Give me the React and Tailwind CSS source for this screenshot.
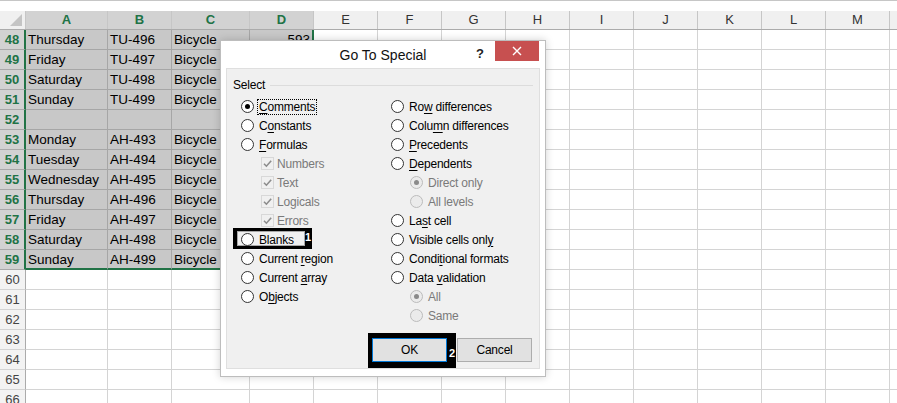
import React from 'react';

const cols = [
  { k: 'A', w: 'w-[82px]', sel: true },
  { k: 'B', w: 'w-[64px]', sel: true },
  { k: 'C', w: 'w-[78px]', sel: true },
  { k: 'D', w: 'w-[64px]', sel: true },
  ...['E', 'F', 'G', 'H', 'I', 'J', 'K', 'L', 'M', 'N'].map((k) => ({ k, w: 'w-[64px]', sel: false })),
];

// column D is hidden under the dialog below row 48
const rows = [
  [48, 'Thursday', 'TU-496', 'Bicycle', '593'],
  [49, 'Friday', 'TU-497', 'Bicycle', ''],
  [50, 'Saturday', 'TU-498', 'Bicycle', ''],
  [51, 'Sunday', 'TU-499', 'Bicycle', ''],
  [52, '', '', '', ''],
  [53, 'Monday', 'AH-493', 'Bicycle', ''],
  [54, 'Tuesday', 'AH-494', 'Bicycle', ''],
  [55, 'Wednesday', 'AH-495', 'Bicycle', ''],
  [56, 'Thursday', 'AH-496', 'Bicycle', ''],
  [57, 'Friday', 'AH-497', 'Bicycle', ''],
  [58, 'Saturday', 'AH-498', 'Bicycle', ''],
  [59, 'Sunday', 'AH-499', 'Bicycle', ''],
  [60], [61], [62], [63], [64], [65], [66],
];

function HeaderRow() {
  return (
    <div className="flex h-[19px] shrink-0 bg-[#f0f0f0] border-b border-[#ababab]">
      <div className="w-[26px] shrink-0 h-full border-r border-[#c6c6c6] relative">
        <svg className="absolute right-[3px] bottom-[3px]" width="12" height="12" viewBox="0 0 12 12">
          <polygon points="12,0 12,12 0,12" fill="#c4c4c4" />
        </svg>
      </div>
      {cols.map((c) => (
        <div
          key={c.k}
          className={`${c.w} shrink-0 h-full border-r border-[#c6c6c6] flex items-center justify-center text-[13px] ${
            c.sel ? 'bg-[#d2d2d2] text-[#217346] font-bold' : 'text-[#333]'
          }`}
        >
          {c.k === 'N' ? '' : c.k}
        </div>
      ))}
    </div>
  );
}

function SheetRow({ r }) {
  const [n, ...vals] = r;
  const sel = n <= 59;
  const last = n === 59;
  return (
    <div className="flex h-[20px] shrink-0">
      <div
        className={`w-[26px] shrink-0 h-full border-b flex items-center justify-center text-[13px] ${
          sel
            ? 'bg-[#d2d2d2] border-[#a8a8a8] border-r-2 border-r-[#217346] text-[#217346] font-bold'
            : 'bg-[#f3f3f3] border-[#d4d4d4] border-r border-r-[#ababab] text-[#444]'
        }`}
      >
        {n}
      </div>
      {cols.map((c, i) => {
        const inSel = sel && c.sel;
        let cls = `${c.w} shrink-0 h-full flex items-center pt-[2px] px-[2px] text-[13.5px] text-black overflow-hidden whitespace-nowrap `;
        if (inSel) {
          cls += 'bg-[#c8c8c8] border-[#a6a6a6] ';
          cls += i === 3 ? 'border-r-2 border-r-[#217346] justify-end ' : 'border-r ';
          cls += last ? 'border-b-2 border-b-[#217346] ' : 'border-b ';
        } else {
          cls += 'bg-white border-[#d4d4d4] border-r border-b ';
        }
        return (
          <div key={c.k} className={cls}>
            {inSel ? vals[i] : ''}
          </div>
        );
      })}
    </div>
  );
}

function Radio({ checked, disabled }) {
  return (
    <span
      className={`w-[13px] h-[13px] shrink-0 rounded-full border flex items-center justify-center ${
        disabled ? 'border-[#bcbcbc] bg-[#ebebeb]' : 'border-[#333333] bg-white'
      }`}
    >
      {checked && (
        <span className={`w-[5px] h-[5px] rounded-full ${disabled ? 'bg-[#8a8a8a]' : 'bg-black'}`} />
      )}
    </span>
  );
}

function Check() {
  return (
    <span className="w-[13px] h-[13px] shrink-0 border border-[#d8d8d8] bg-[#f0f0f0] flex items-center justify-center">
      <svg width="11" height="11" viewBox="0 0 11 11">
        <path d="M2 5.8 L4.4 8.2 L9.2 2.8" fill="none" stroke="#8c8c8c" strokeWidth="1.6" />
      </svg>
    </span>
  );
}

function Label({ t, focus, disabled }) {
  const [a, k, b] = t;
  return (
    <span
      className={`px-[1px] leading-[13px] border ${focus ? 'border-dotted border-black' : 'border-transparent'} ${
        disabled ? 'text-[#7a7a7a]' : 'text-black'
      }`}
    >
      {a}
      {k && <span className="underline underline-offset-[2px]">{k}</span>}
      {b}
    </span>
  );
}

function Opt({ kind = 'radio', t, checked, disabled, focus, indent = '', children }) {
  return (
    <div className={`h-[19px] flex items-center relative ${indent}`}>
      {children}
      <span className="relative z-10 flex items-center">
        {kind === 'check' ? <Check /> : <Radio checked={checked} disabled={disabled} />}
        <span className={kind === 'check' ? 'ml-[1px]' : 'ml-[3px]'}>
          <Label t={t} focus={focus} disabled={disabled} />
        </span>
      </span>
    </div>
  );
}

function Dialog() {
  return (
    <div className="absolute left-[220px] top-[40px] w-[326px] h-[337px] bg-white border border-[#bdbdbd] shadow-[0_0_8px_rgba(0,0,0,0.18)] flex flex-col">
      <div className="h-[27px] shrink-0 relative flex items-center justify-center">
        <span className="text-[14px] text-[#111] pt-[1px]">Go To Special</span>
        <span className="absolute right-[61px] top-[3px] text-[13px] font-bold text-[#222]">?</span>
        <div className="absolute right-[6px] top-0 w-[44px] h-[20px] bg-[#c75050] flex items-center justify-center">
          <svg width="10" height="10" viewBox="0 0 10 10">
            <path d="M1 1 L9 9 M9 1 L1 9" stroke="white" strokeWidth="1.4" />
          </svg>
        </div>
      </div>
      <div className="mx-[5px] h-[301px] shrink-0 bg-[#f0f0f0] border border-[#dfdfdf] flex flex-col text-[12px] tracking-[-0.2px]">
        <div className="pt-[9px] h-[23px] flex items-center">
          <span className="ml-[6px] text-black">Select</span>
          <span className="flex-1 h-px bg-[#dcdcdc] ml-[5px] mr-[6px]" />
        </div>
        <div className="mt-[5px] flex">
          <div className="w-[164px] pl-[14px] flex flex-col">
            <Opt t={['', 'C', 'omments']} checked focus />
            <Opt t={['C', 'o', 'nstants']} />
            <Opt t={['', 'F', 'ormulas']} />
            <Opt kind="check" indent="pl-[20px]" t={['Numbers']} disabled />
            <Opt kind="check" indent="pl-[20px]" t={['Text']} disabled />
            <Opt kind="check" indent="pl-[20px]" t={['Logicals']} disabled />
            <Opt kind="check" indent="pl-[20px]" t={['Errors']} disabled />
            <Opt t={['Blan', 'k', 's']}>
              <div className="absolute left-[-8px] top-[-2px] w-[79px] h-[21px] bg-black">
                <div className="absolute left-[4px] top-[3px] w-[68px] h-[15px] bg-[#f0f0f0] border border-[#a8a8a8]" />
                <span className="absolute right-[1px] top-[4px] text-[11px] leading-[11px] font-bold text-white">1</span>
              </div>
            </Opt>
            <Opt t={['Current ', 'r', 'egion']} />
            <Opt t={['Current ', 'a', 'rray']} />
            <Opt t={['O', 'b', 'jects']} />
          </div>
          <div className="flex-1 flex flex-col">
            <Opt t={['Ro', 'w', ' differences']} />
            <Opt t={['Colu', 'm', 'n differences']} />
            <Opt t={['', 'P', 'recedents']} />
            <Opt t={['', 'D', 'ependents']} />
            <Opt indent="pl-[19px]" t={['Direct only']} checked disabled />
            <Opt indent="pl-[19px]" t={['All levels']} disabled />
            <Opt t={['La', 's', 't cell']} />
            <Opt t={['Visible cells onl', 'y', '']} />
            <Opt t={['Condi', 't', 'ional formats']} />
            <Opt t={['Data ', 'v', 'alidation']} />
            <Opt indent="pl-[19px]" t={['All']} checked disabled />
            <Opt indent="pl-[19px]" t={['Same']} disabled />
          </div>
        </div>
        <div className="mt-[13px] flex justify-end gap-[10px] pr-[7px]">
          <div className="relative">
            <div className="absolute left-[-4px] top-[-5px] w-[88px] h-[35px] bg-black">
              <span className="absolute right-[1px] top-[15px] text-[11px] leading-[11px] font-bold text-white">2</span>
            </div>
            <div className="relative w-[75px] h-[24px] bg-[#e1e1e1] border border-[#0078d7] flex items-center justify-center text-black">
              OK
            </div>
          </div>
          <div className="w-[75px] h-[24px] bg-[#e1e1e1] border border-[#adadad] flex items-center justify-center text-black">
            Cancel
          </div>
        </div>
      </div>
    </div>
  );
}

export default function App() {
  return (
    <div className="w-[897px] h-[403px] overflow-hidden relative bg-white font-['Liberation_Sans',Arial,sans-serif]">
      <div className="flex flex-col">
        <div className="h-[11px] shrink-0 border-t border-[#c6c6c6] bg-white" />
        <HeaderRow />
        {rows.map((r) => (
          <SheetRow key={r[0]} r={r} />
        ))}
      </div>
      <Dialog />
    </div>
  );
}
